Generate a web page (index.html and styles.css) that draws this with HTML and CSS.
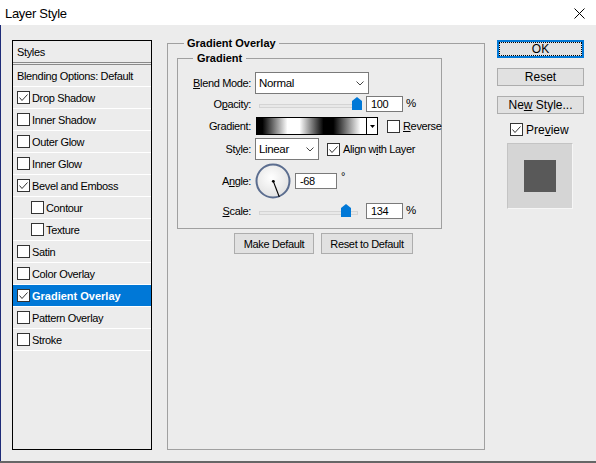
FILE: index.html
```html
<!DOCTYPE html>
<html lang="en">
<head>
  <meta charset="UTF-8" />
  <title>Layer Style</title>
  <link rel="stylesheet" href="styles.css">
</head>
<body>
  <div class="window">
    <div class="titlebar">
      <span class="title">Layer Style</span>
      <svg class="close" width="11" height="11" viewBox="0 0 11 11"><path d="M0.5 0.5 L10.5 10.5 M10.5 0.5 L0.5 10.5" stroke="#000" stroke-width="1" fill="none"/></svg>
    </div>

    <div class="dialog">
      <!-- Styles list -->
      <div class="styles-list">
        <div class="list-head">Styles</div>
        <div class="item">Blending Options: Default</div>
        <div class="item"><span class="cb"><svg width="11" height="11" viewBox="0 0 11 11"><polyline points="1.5,5.5 4,8.5 9.5,2.5" fill="none" stroke="#333" stroke-width="1"/></svg></span>Drop Shadow</div>
        <div class="item"><span class="cb"></span>Inner Shadow</div>
        <div class="item"><span class="cb"></span>Outer Glow</div>
        <div class="item"><span class="cb"></span>Inner Glow</div>
        <div class="item"><span class="cb"><svg width="11" height="11" viewBox="0 0 11 11"><polyline points="1.5,5.5 4,8.5 9.5,2.5" fill="none" stroke="#333" stroke-width="1"/></svg></span>Bevel and Emboss</div>
        <div class="item sub"><span class="cb"></span>Contour</div>
        <div class="item sub"><span class="cb"></span>Texture</div>
        <div class="item"><span class="cb"></span>Satin</div>
        <div class="item"><span class="cb"></span>Color Overlay</div>
        <div class="item sel"><span class="cb"><svg width="11" height="11" viewBox="0 0 11 11"><polyline points="1.5,5.5 4,8.5 9.5,2.5" fill="none" stroke="#333" stroke-width="1"/></svg></span>Gradient Overlay</div>
        <div class="item"><span class="cb"></span>Pattern Overlay</div>
        <div class="item"><span class="cb"></span>Stroke</div>
      </div>

      <!-- Gradient Overlay panel -->
      <fieldset class="group outer">
        <legend>Gradient Overlay</legend>
        <fieldset class="group inner">
          <legend>Gradient</legend>

          <div class="row r-blend">
            <span class="lbl"><u>B</u>lend Mode:</span>
            <div class="select blend-select">
              <span>Normal</span>
              <svg width="8" height="5" viewBox="0 0 8 5"><polyline points="0.5,0.5 4,4 7.5,0.5" fill="none" stroke="#444" stroke-width="1"/></svg>
            </div>
          </div>

          <div class="row r-opacity">
            <span class="lbl">O<u>p</u>acity:</span>
            <div class="slider">
              <div class="track"></div>
              <svg class="thumb opacity-thumb" width="10" height="13" viewBox="0 0 10 13"><path d="M0 4 L5 0 L10 4 V13 H0 Z" fill="#0078d7"/></svg>
            </div>
            <div class="field num">100</div>
            <span class="unit">%</span>
          </div>

          <div class="row r-gradient">
            <span class="lbl">Gradient:</span>
            <div class="swatch">
              <div class="grad"></div>
              <div class="drop"><svg width="5" height="3" viewBox="0 0 5 3"><path d="M0 0 H5 L2.5 3 Z" fill="#000"/></svg></div>
            </div>
            <span class="cb reverse-cb"></span>
            <span class="cb-label"><u>R</u>everse</span>
          </div>

          <div class="row r-style">
            <span class="lbl">St<u>y</u>le:</span>
            <div class="select style-select">
              <span>Linear</span>
              <svg width="8" height="5" viewBox="0 0 8 5"><polyline points="0.5,0.5 4,4 7.5,0.5" fill="none" stroke="#444" stroke-width="1"/></svg>
            </div>
            <span class="cb align-cb"><svg width="11" height="11" viewBox="0 0 11 11"><polyline points="1.5,5.5 4,8.5 9.5,2.5" fill="none" stroke="#333" stroke-width="1"/></svg></span>
            <span class="cb-label">Align w<u>i</u>th Layer</span>
          </div>

          <div class="row r-angle">
            <span class="lbl">A<u>n</u>gle:</span>
            <svg class="dial" width="36" height="36" viewBox="0 0 36 36">
              <defs>
                <radialGradient id="dialfill" cx="45%" cy="40%" r="60%">
                  <stop offset="0%" stop-color="#ffffff"/>
                  <stop offset="100%" stop-color="#e2e2e2"/>
                </radialGradient>
              </defs>
              <circle cx="18" cy="18" r="16.5" fill="url(#dialfill)" stroke="#5b6d8f" stroke-width="2"/>
              <line x1="18.3" y1="18.3" x2="24.3" y2="34" stroke="#000" stroke-width="1.1"/>
              <circle cx="18.3" cy="18.3" r="1.4" fill="#000"/>
            </svg>
            <div class="field angle-field">-68</div>
            <span class="deg">°</span>
          </div>

          <div class="row r-scale">
            <span class="lbl"><u>S</u>cale:</span>
            <div class="slider">
              <div class="track"></div>
              <svg class="thumb scale-thumb" width="10" height="13" viewBox="0 0 10 13"><path d="M0 4 L5 0 L10 4 V13 H0 Z" fill="#0078d7"/></svg>
            </div>
            <div class="field num">134</div>
            <span class="unit">%</span>
          </div>
        </fieldset>

        <div class="defaults">
          <button class="small-btn make-btn">Make Default</button>
          <button class="small-btn reset-def-btn">Reset to Default</button>
        </div>
      </fieldset>

      <!-- Right side buttons -->
      <div class="side">
        <button class="btn default"><span class="focus">OK</span></button>
        <button class="btn"><span>Reset</span></button>
        <button class="btn"><span>Ne<u>w</u> Style...</span></button>
        <div class="preview-toggle">
          <span class="cb"><svg width="11" height="11" viewBox="0 0 11 11"><polyline points="1.5,5.5 4,8.5 9.5,2.5" fill="none" stroke="#333" stroke-width="1"/></svg></span>
          <span class="preview-label">Pre<u>v</u>iew</span>
        </div>
        <div class="preview-box"><div class="preview-square"></div></div>
      </div>
    </div>
  </div>
</body>
</html>
```

FILE: styles.css
```css
:root {
  --bg:#ececec;
  --frame:#a0a0a0;
  --blue:#0078d7;
  --btn:#e1e1e1;
  --btn-border:#adadad;
  font-family: "Liberation Sans", Arial, sans-serif;
}
*{box-sizing:border-box;}
body {margin:0; background:var(--bg);}
u {text-decoration:underline; text-underline-offset:1px;}

.window {
  width:596px;
  height:463px;
  background:var(--bg);
  border-bottom:2px solid #666;
  display:flex;
  flex-direction:column;
  overflow:hidden;
}
.titlebar {
  height:25px;
  background:#fff;
  display:flex;
  align-items:center;
  justify-content:space-between;
  padding:2px 11px 0 5px;
  flex:none;
}
.title {font-size:13px; letter-spacing:-0.3px; color:#000;}

.dialog {
  flex:1;
  display:flex;
  align-items:flex-start;
  padding-left:11px;
  border-left:1px solid #1e2b78;
  font-size:11px;
  letter-spacing:-0.35px;
  color:#000;
}

/* styles list */
.styles-list {
  margin-top:15px;
  width:140px;
  height:410px;
  border:1px solid #000;
  flex:none;
}
.list-head {
  height:24px;
  border-bottom:3px double #8a8a8a;
  display:flex;
  align-items:center;
  padding-left:4px;
}
.item {
  height:22px;
  border-bottom:1px solid #fff;
  display:flex;
  align-items:center;
  padding-left:4px;
  gap:2px;
}
.item.sub {padding-left:18px;}
.item.sel {background:var(--blue); color:#fff; font-weight:bold; letter-spacing:0;}

.cb {
  width:13px;
  height:13px;
  border:1px solid #333;
  background:#fff;
  display:inline-flex;
  flex:none;
}

/* group boxes */
.group {
  margin:0;
  border:1px solid var(--frame);
  min-inline-size:0;
}
.group legend {
  font-weight:bold;
  letter-spacing:0;
  line-height:13px;
  padding:0 3px;
}
.outer {
  margin-top:12px;
  margin-left:15px;
  width:318px;
  height:413px;
  padding:2px 42px 0 9px;
  flex:none;
}
.outer > legend {margin-left:7px;}
.inner {
  width:265px;
  padding:7px 0 9px 0;
}
.inner > legend {margin-left:15px; padding:0 4px;}

.row {display:flex; align-items:center;}
.r-blend {height:22px;}
.r-opacity {height:16px; margin-top:2px;}
.r-gradient {height:20px; margin-top:4px;}
.r-style {height:22px; margin-top:2px;}
.r-angle {height:36px; margin-top:3px;}
.r-scale {height:16px; margin-top:4px;}

.lbl {width:73px; text-align:right; flex:none;}

.select {
  height:22px;
  background:#fff;
  border:1px solid #7a7a7a;
  display:flex;
  align-items:center;
  justify-content:space-between;
  padding:0 4px 0 3px;
  margin-left:4px;
  font-size:11.5px;
}
.blend-select {width:114px;}
.style-select {width:64px;}

.slider {position:relative; width:103px; height:16px; margin-left:8px; flex:none;}
.track {
  position:absolute;
  left:0;
  top:8px;
  width:99px;
  height:4px;
  background:#e8e8e8;
  border:1px solid #d4d4d4;
}
.thumb {position:absolute; top:1px;}
.opacity-thumb {left:93px;}
.scale-thumb {left:82px;}

.field {
  height:16px;
  background:#fff;
  border:1px solid #7a7a7a;
  display:flex;
  align-items:center;
  padding-left:4px;
  flex:none;
}
.num {width:37px; margin-left:4px;}
.unit {margin-left:3px; margin-top:-3px; font-size:11.5px;}

.swatch {
  width:122px;
  height:18px;
  margin-left:5px;
  border:1px solid #000;
  display:flex;
  flex:none;
}
.grad {
  flex:1;
  background:linear-gradient(90deg,#000 0%,#000 5%,#fff 28%,#fff 39%,#000 61%,#000 70%,#fff 95%,#fff 100%);
}
.drop {
  width:11px;
  border-left:1px solid #000;
  background:#fff;
  display:flex;
  align-items:center;
  justify-content:center;
}
.reverse-cb {margin-left:9px;}
.align-cb {margin-left:8px;}
.cb-label {margin-left:3px;}

.dial {margin-left:4px; flex:none;}
.angle-field {width:42px; margin-left:4px;}
.deg {align-self:flex-start; margin-top:7px; margin-left:4px;}

.defaults {
  display:flex;
  gap:7px;
  margin-top:4px;
  padding-left:57px;
}
.small-btn {
  height:21px;
  background:var(--btn);
  border:1px solid var(--btn-border);
  font-family:inherit;
  font-size:11px;
  letter-spacing:-0.35px;
  color:#000;
  padding:0;
}
.make-btn {width:80px;}
.reset-def-btn {width:92px;}

/* right side */
.side {
  margin-top:15px;
  margin-left:12px;
  width:87px;
  display:flex;
  flex-direction:column;
  flex:none;
  letter-spacing:0;
}
.btn {
  width:87px;
  height:18px;
  margin-bottom:10px;
  background:var(--btn);
  border:1px solid var(--btn-border);
  font-family:inherit;
  font-size:12px;
  color:#000;
  padding:0;
  display:flex;
  align-items:center;
  justify-content:center;
}
.btn.default {border:2px solid var(--blue); padding:0;}
.focus {
  flex:1;
  align-self:stretch;
  border:1px dotted #000;
  display:flex;
  align-items:center;
  justify-content:center;
}
.preview-toggle {
  display:flex;
  align-items:center;
  height:13px;
  margin-top:-1px;
  padding-left:13px;
}
.preview-label {margin-left:3px; font-size:12px;}
.preview-box {
  width:66px;
  height:66px;
  margin-top:7px;
  margin-left:10px;
  background:#d5d5d5;
  border:1px solid;
  border-color:#c4c4c4 #f6f6f6 #f6f6f6 #c4c4c4;
  display:flex;
  align-items:center;
  justify-content:center;
}
.preview-square {width:32px; height:32px; background:#595959;}
```
